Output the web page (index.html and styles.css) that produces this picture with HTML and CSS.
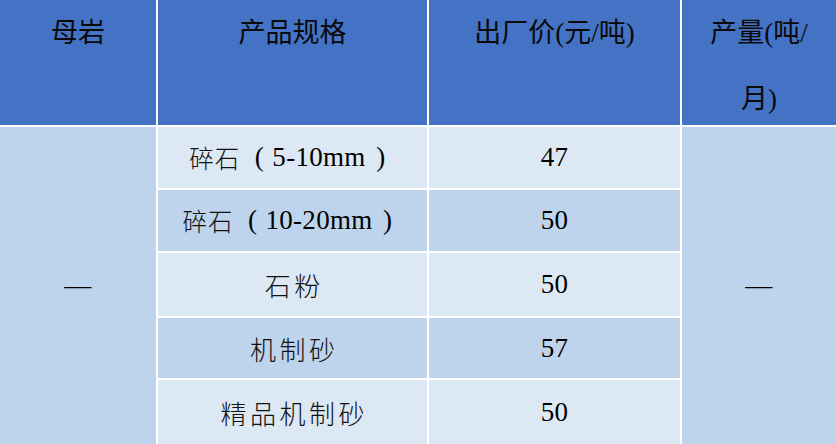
FILE: index.html
```html
<!DOCTYPE html>
<html lang="zh-CN">
<head>
<meta charset="utf-8">
<title>产品价格表</title>
<link rel="stylesheet" href="styles.css">
</head>
<body>
<div class="table">
  <div class="th">母岩</div>
  <div class="th">产品规格</div>
  <div class="th">出厂价(元/吨)</div>
  <div class="th">产量(吨/<br>月)</div>

  <div class="td merged col1"><span class="num">—</span></div>
  <div class="td light tight">碎石<span class="paren open">(</span><span class="num">5-10mm</span><span class="paren close">)</span></div>
  <div class="td light"><span class="num">47</span></div>
  <div class="td merged col4"><span class="num">—</span></div>

  <div class="td dark tight">碎石<span class="paren open">(</span><span class="num">10-20mm</span><span class="paren close">)</span></div>
  <div class="td dark"><span class="num">50</span></div>

  <div class="td light wide">石粉</div>
  <div class="td light"><span class="num">50</span></div>

  <div class="td dark wide">机制砂</div>
  <div class="td dark"><span class="num">57</span></div>

  <div class="td light wide">精品机制砂</div>
  <div class="td light"><span class="num">50</span></div>
</div>
</body>
</html>
```

FILE: styles.css
```css
html, body {
  margin: 0;
  padding: 0;
  background: #ffffff;
}

body {
  width: 836px;
  height: 444px;
  overflow: hidden;
}

.table {
  display: grid;
  grid-template-columns: 156px 269px 251px 154px;
  grid-template-rows: 125px 61px 61px 63px 60px 64px;
  gap: 2px;
  width: 836px;
  height: 444px;
  background: #ffffff;
  font-family: "Liberation Serif", "Noto Sans CJK SC", serif;
  color: #000000;
}

.th {
  background: #4472c4;
  font-family: "Liberation Serif", "Noto Sans CJK SC", sans-serif;
  font-size: 27px;
  line-height: 66px;
  text-align: center;
  color: #0a0a0a;
}

.td {
  display: flex;
  align-items: center;
  justify-content: center;
  font-family: "Noto Sans CJK SC", sans-serif;
  font-size: 24px;
  font-weight: 300;
  color: #111111;
}

.tight {
  font-size: 24.5px;
  letter-spacing: 1px;
}

.wide {
  font-size: 26px;
  letter-spacing: 3.5px;
  padding-left: 3.5px;
}

.num {
  font-family: "Liberation Serif", serif;
  font-weight: 400;
  font-size: 27px;
  letter-spacing: 0.3px;
  color: #000000;
}

.paren {
  display: inline-block;
  box-sizing: border-box;
  text-align: center;
  font-family: "Liberation Serif", serif;
  font-weight: 400;
  font-size: 27px;
  letter-spacing: 0;
  color: #000000;
}

.open {
  width: 32px;
  padding-left: 6px;
}

.close {
  width: 30px;
}

.light {
  background: #dde8f5;
}

.dark {
  background: #bed4ec;
}

.merged {
  background: #bed4ec;
  grid-row: 2 / span 5;
}

.col1 {
  grid-column: 1;
}

.col4 {
  grid-column: 4;
}
```
